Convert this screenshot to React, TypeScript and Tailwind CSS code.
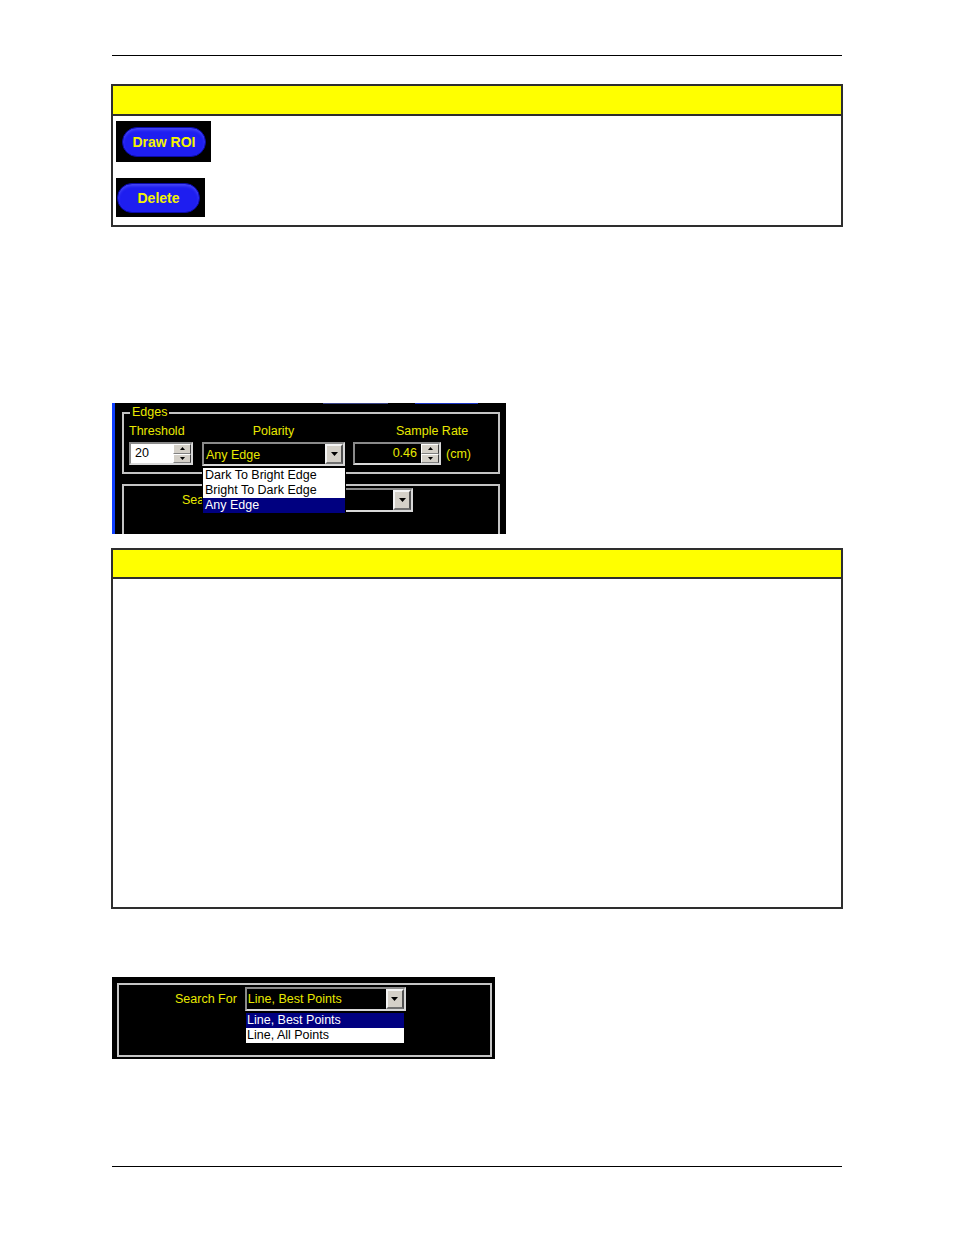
import React from "react";

const ui = { fontFamily: '"Liberation Sans", Arial, sans-serif' };

function Tri() {
  return (
    <svg width="7" height="4" viewBox="0 0 7 4">
      <path d="M0 0h7L3.5 4z" fill="#000" />
    </svg>
  );
}

function TinyTri({ up }: { up?: boolean }) {
  return (
    <svg width="5" height="3" viewBox="0 0 5 3">
      <path d={up ? "M0 3h5L2.5 0z" : "M0 0h5L2.5 3z"} fill="#000" />
    </svg>
  );
}

function Spin() {
  return (
    <div className="flex flex-col w-[18px] h-full">
      <div className="flex-1 flex items-center justify-center bg-[#d4d0c8] border border-t-[#fff] border-l-[#fff] border-r-[#404040] border-b-[#808080]">
        <TinyTri up />
      </div>
      <div className="flex-1 flex items-center justify-center bg-[#d4d0c8] border border-t-[#fff] border-l-[#fff] border-r-[#404040] border-b-[#808080]">
        <TinyTri />
      </div>
    </div>
  );
}

function DropBtn() {
  return (
    <div className="w-[18px] h-full flex items-center justify-center bg-[#d4d0c8] border-2 border-t-[#f4f4f4] border-l-[#f4f4f4] border-r-[#505050] border-b-[#707070]">
      <Tri />
    </div>
  );
}

const sunken =
  "border-2 border-t-[#8a8a8a] border-l-[#8a8a8a] border-r-[#d8d8d8] border-b-[#d8d8d8]";

function PillButton({
  label,
  boxW,
  boxH,
  pillW,
  pl,
}: {
  label: string;
  boxW: string;
  boxH: string;
  pillW: string;
  pl: string;
}) {
  return (
    <div className={`bg-black flex items-center ${boxW} ${boxH} ${pl}`}>
      <div
        className={`${pillW} h-[30px] rounded-full bg-[#1e1ef0] border border-[#0a0aa8] shadow-[inset_0_2px_3px_rgba(120,120,255,0.45)] flex items-center justify-center`}
      >
        <span className="text-[14px] font-bold text-[#f4f400] leading-none" style={ui}>
          {label}
        </span>
      </div>
    </div>
  );
}

function Table1() {
  return (
    <div className="mt-[28px] ml-[111px] w-[732px] h-[143px] border-2 border-[#2e2e2e] flex flex-col bg-white">
      <div className="h-[30px] bg-[#ffff00] border-b-2 border-[#2e2e2e]" />
      <div className="flex flex-col items-start gap-[16px] pt-[5px] pl-[3px]">
        <PillButton label="Draw ROI" boxW="w-[95px]" boxH="h-[41px]" pillW="w-[84px]" pl="pl-[6px]" />
        <PillButton label="Delete" boxW="w-[89px]" boxH="h-[39px]" pillW="w-[83px]" pl="pl-[1px]" />
      </div>
    </div>
  );
}

const yellow = "text-[#e8e800]";

function EdgesShot() {
  return (
    <div
      className="mt-[176px] ml-[112px] w-[394px] h-[131px] bg-black border-l-[3px] border-[#1040ff] relative overflow-hidden text-[12.5px] leading-[14px]"
      style={ui}
    >
      <div className="absolute top-0 left-[208px] w-[65px] h-px bg-[#3a4488]" />
      <div className="absolute top-0 left-[300px] w-[63px] h-px bg-[#1a34c8]" />

      {/* Edges group */}
      <div className="relative mt-[9px] ml-[7px] w-[378px] h-[62px] border-2 border-[#c4c4c4]">
        <div className={`absolute -top-[9px] left-[6px] bg-black px-[2px] ${yellow}`}>Edges</div>
        <div className="flex pt-[10px] pl-[5px]">
          <div className="flex flex-col gap-[4px] w-[64px]">
            <div className={yellow}>Threshold</div>
            <div className={`flex h-[23px] bg-white ${sunken}`}>
              <div className="flex-1 pl-[4px] text-black leading-[19px]">20</div>
              <Spin />
            </div>
          </div>
          <div className="flex flex-col gap-[4px] w-[143px] ml-[9px]">
            <div className={`${yellow} text-center`}>Polarity</div>
            <div className={`flex h-[24px] bg-black ${sunken}`}>
              <div className={`flex-1 pl-[2px] ${yellow} leading-[20px] pt-[1px]`}>Any Edge</div>
              <DropBtn />
            </div>
          </div>
          <div className="flex flex-col gap-[4px] ml-[8px]">
            <div className={`${yellow} pl-[43px]`}>Sample Rate</div>
            <div className="flex items-center">
              <div className={`flex w-[88px] h-[23px] bg-black ${sunken}`}>
                <div className={`flex-1 text-right pr-[4px] ${yellow} leading-[19px]`}>0.46</div>
                <Spin />
              </div>
              <div className={`ml-[5px] ${yellow}`}>(cm)</div>
            </div>
          </div>
        </div>
      </div>

      {/* Search group (cut off, mostly covered by the open list) */}
      <div className="mt-[10px] ml-[7px] w-[378px] h-[60px] border-2 border-[#c4c4c4]">
        <div className="flex items-center pt-[2px] pl-[58px]">
          <div className={`${yellow} w-[20px]`}>Sea</div>
          <div className={`ml-[48px] flex w-[163px] h-[24px] bg-black ${sunken}`}>
            <div className="flex-1" />
            <DropBtn />
          </div>
        </div>
      </div>

      {/* Open list */}
      <div className="absolute left-[87px] top-[64px] w-[144px] h-[47px] bg-white border border-black text-black">
        <div className="h-[15px] leading-[15px] px-[2px]">Dark To Bright Edge</div>
        <div className="h-[15px] leading-[15px] px-[2px]">Bright To Dark Edge</div>
        <div className="h-[15px] leading-[15px] px-[2px] bg-[#000080] text-white">Any Edge</div>
      </div>
    </div>
  );
}

function Table2() {
  return (
    <div className="mt-[14px] ml-[111px] w-[732px] h-[361px] border-2 border-[#2e2e2e] flex flex-col bg-white">
      <div className="h-[29px] bg-[#ffff00] border-b-2 border-[#2e2e2e]" />
    </div>
  );
}

function SearchShot() {
  return (
    <div
      className="relative mt-[68px] ml-[112px] w-[383px] h-[82px] bg-black pt-[6px] pl-[5px] pr-[3px] pb-[2px] text-[12.5px] leading-[14px]"
      style={ui}
    >
      <div className="w-full h-full border-2 border-[#c4c4c4]">
        <div className="flex items-center pt-[2px] pl-[56px]">
          <div className={yellow}>Search For</div>
          <div className={`ml-[8px] flex w-[161px] h-[24px] bg-black ${sunken}`}>
            <div className={`flex-1 pl-[1px] ${yellow} leading-[20px]`}>Line, Best Points</div>
            <DropBtn />
          </div>
        </div>
      </div>
      <div className="absolute left-[133px] top-[35px] w-[160px] h-[32px] bg-white border border-black text-black">
        <div className="h-[15px] leading-[15px] px-[1px] bg-[#000080] text-white">Line, Best Points</div>
        <div className="h-[15px] leading-[15px] px-[1px]">Line, All Points</div>
      </div>
    </div>
  );
}

export default function App() {
  return (
    <div className="w-[954px] h-[1235px] bg-white flex flex-col">
      <div className="mt-[55px] ml-[112px] w-[730px] h-px bg-black" />
      <Table1 />
      <EdgesShot />
      <Table2 />
      <SearchShot />
      <div className="mt-[107px] ml-[112px] w-[730px] h-px bg-black" />
    </div>
  );
}
